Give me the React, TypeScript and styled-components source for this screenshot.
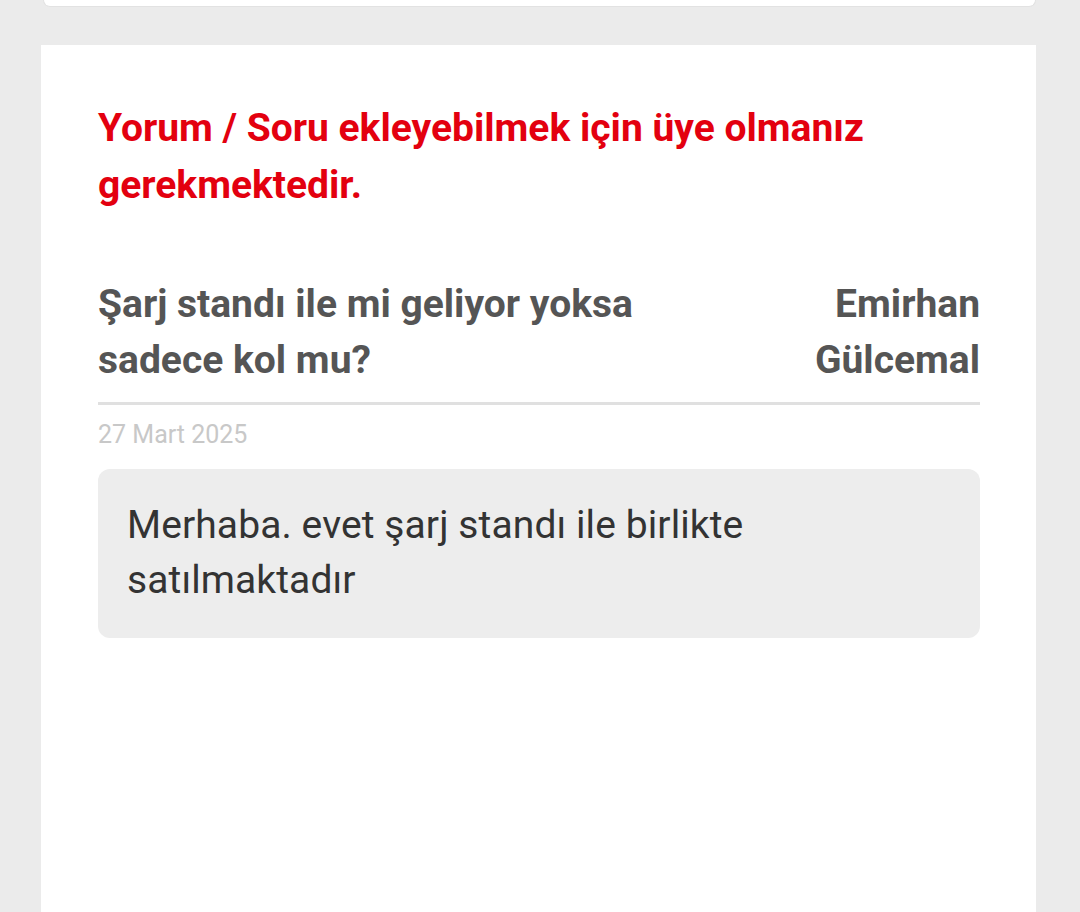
import React from "react";
import styled, { createGlobalStyle } from "styled-components";

const Global = createGlobalStyle`
  html, body {
    margin: 0;
    padding: 0;
    background: #ebebeb;
    font-family: Roboto, "Noto Sans", Arial, sans-serif;
  }
`;

const Page = styled.div`
  min-height: 912px;
  background: #ebebeb;
  overflow: hidden;
`;

const TopCard = styled.div`
  margin-left: 43px;
  width: 993px;
  height: 7px;
  background: #fff;
  border: 1px solid #e2e2e2;
  border-top: none;
  box-sizing: border-box;
  border-radius: 0 0 12px 12px;
`;

const Card = styled.section`
  margin: 38px 0 0 41px;
  width: 995px;
  min-height: 867px;
  background: #fff;
  box-sizing: border-box;
  padding: 55px 56px 40px 57px;
`;

const Notice = styled.p`
  margin: 0;
  color: #e3000f;
  font-size: 39px;
  font-weight: 700;
  line-height: 57px;
`;

const QuestionRow = styled.div`
  display: flex;
  justify-content: space-between;
  align-items: flex-start;
  margin-top: 62px;
  padding-bottom: 14px;
  border-bottom: 3px solid #e0e0e0;
`;

const Question = styled.h3`
  margin: 0;
  flex: 0 0 66%;
  color: #555;
  font-size: 39px;
  font-weight: 700;
  line-height: 56px;
`;

const Author = styled.div`
  flex: 0 0 30%;
  text-align: right;
  color: #555;
  font-size: 39px;
  font-weight: 700;
  line-height: 56px;
`;

const DateText = styled.div`
  margin-top: 14px;
  color: #c8c8c8;
  font-size: 25px;
  line-height: 32px;
`;

const Answer = styled.div`
  margin-top: 18px;
  background: #ededed;
  border-radius: 12px;
  padding: 29px 29px 30px;
  color: #333;
  font-size: 39px;
  line-height: 55px;
  letter-spacing: 0.1px;
`;

export default function App() {
  return (
    <Page>
      <Global />
      <TopCard />
      <Card>
        <Notice>Yorum / Soru ekleyebilmek için üye olmanız gerekmektedir.</Notice>
        <QuestionRow>
          <Question>Şarj standı ile mi geliyor yoksa sadece kol mu?</Question>
          <Author>Emirhan Gülcemal</Author>
        </QuestionRow>
        <DateText>27 Mart 2025</DateText>
        <Answer>Merhaba. evet şarj standı ile birlikte satılmaktadır</Answer>
      </Card>
    </Page>
  );
}
